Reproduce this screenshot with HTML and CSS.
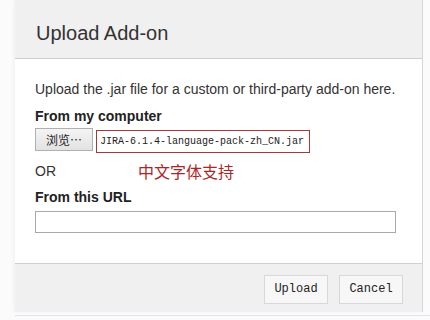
FILE: index.html
```html
<!DOCTYPE html>
<html>
<head>
<meta charset="utf-8">
<link rel="stylesheet" href="styles.css">
</head>
<body>
<div class="page">
  <div class="dialog">
    <div class="header"><h2 class="title">Upload Add-on</h2></div>
    <div class="content">
      <p class="desc">Upload the .jar file for a custom or third-party add-on here.</p>
      <div class="label">From my computer</div>
      <div class="file-row">
        <span class="browse">浏览…</span>
        <span class="filename">JIRA-6.1.4-language-pack-zh_CN.jar</span>
      </div>
      <div class="or-row">
        <span class="or">OR</span>
        <span class="note">中文字体支持</span>
      </div>
      <div class="label">From this URL</div>
      <div class="url-input"></div>
    </div>
    <div class="footer">
      <span class="btn">Upload</span>
      <span class="btn">Cancel</span>
    </div>
  </div>
  <div class="below"></div>
</div>
</body>
</html>
```

FILE: styles.css
```css
html, body {
  margin: 0;
  padding: 0;
  background: #fbfbfb;
  font-family: "Liberation Sans", Arial, sans-serif;
  color: #333;
}
.page {
  width: 430px;
  height: 320px;
  overflow: hidden;
}
.dialog {
  margin-left: 15px;
  width: 407px;
  border-right: 1px solid #d4d4d4;
  background: #fff;
  box-shadow: -2px 0 3px rgba(0,0,0,0.03);
}
.header {
  height: 58px;
  background: #f0f0f0;
  border-bottom: 1px solid #cfcfcf;
  display: flex;
  align-items: center;
}
.title {
  margin: 0 0 0 21px;
  font-size: 20px;
  font-weight: normal;
  color: #333;
  padding-top: 8px;
}
.content {
  padding: 21px 20px 30px 20px;
  height: 153px;
}
.desc {
  margin: 0;
  font-size: 14px;
  line-height: 18px;
  color: #333;
}
.label {
  font-weight: bold;
  font-size: 14px;
  line-height: 18px;
  margin-top: 9px;
  color: #222;
}
.file-row {
  display: flex;
  align-items: flex-start;
  margin-top: 3px;
  gap: 3px;
}
.browse {
  width: 56px;
  height: 21px;
  border: 1px solid #b0b0b0;
  background: linear-gradient(#f4f4f4, #e2e2e2);
  font-family: "Noto Sans CJK SC", sans-serif;
  font-size: 12px;
  line-height: 21px;
  text-align: center;
  color: #222;
}
.filename {
  box-sizing: border-box;
  width: 214px;
  height: 23px;
  border: 1px solid #a33a3a;
  padding-left: 3px;
  font-family: "Liberation Mono", monospace;
  font-size: 10px;
  line-height: 21px;
  white-space: nowrap;
  overflow: hidden;
  color: #222;
  margin-top: 2px;
}
.or-row {
  display: flex;
  align-items: center;
  margin-top: 6px;
  height: 24px;
}
.or {
  font-size: 14px;
  width: 103px;
  color: #333;
}
.note {
  font-family: "Noto Sans CJK SC", sans-serif;
  font-size: 16px;
  color: #ad2626;
}
.or-row + .label {
  margin-top: 5px;
}
.url-input {
  margin-top: 5px;
  width: 359px;
  height: 20px;
  border: 1px solid #a9a9a9;
  background: #fff;
}
.footer {
  height: 48px;
  background: #f0f0f0;
  border-top: 1px solid #cfcfcf;
  display: flex;
  align-items: center;
  justify-content: flex-end;
  gap: 11px;
  padding-right: 19px;
}
.btn {
  width: 62px;
  height: 27px;
  margin-top: 3px;
  border: 1px solid #d8d8d8;
  background: #f7f7f7;
  font-family: "Liberation Mono", monospace;
  font-size: 12px;
  line-height: 27px;
  text-align: center;
  color: #222;
}
.below {
  margin-left: 15px;
  margin-top: 3px;
  height: 1px;
  background: #dfe3ef;
}
```
